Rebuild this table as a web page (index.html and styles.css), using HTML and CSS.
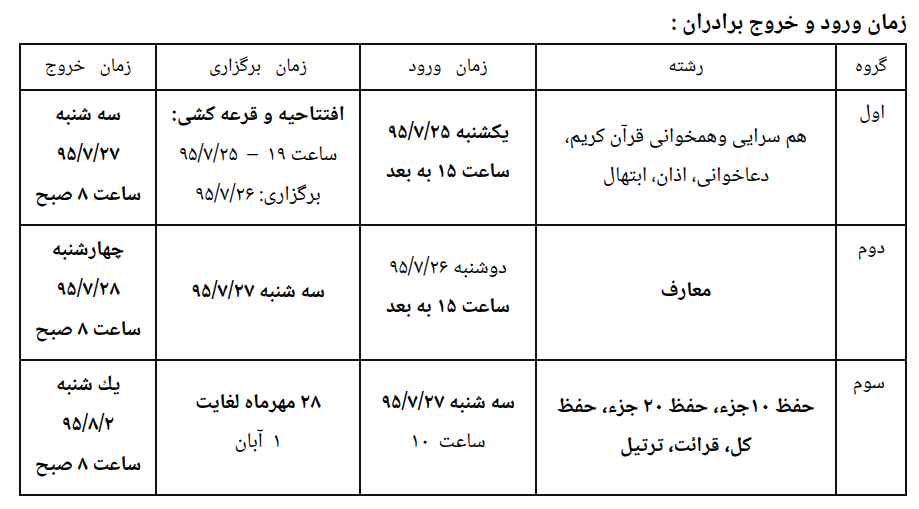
FILE: index.html
```html
<!DOCTYPE html>
<html lang="fa" dir="rtl">
<head>
<meta charset="utf-8">
<link rel="stylesheet" href="styles.css">
</head>
<body>
<div class="page">
  <h1 class="title">زمان ورود و خروج برادران :</h1>
  <table class="schedule">
    <colgroup>
      <col class="c-group">
      <col class="c-field">
      <col class="c-in">
      <col class="c-hold">
      <col class="c-out">
    </colgroup>
    <thead>
      <tr class="head-row">
        <th>گروه</th>
        <th>رشته</th>
        <th>زمان ورود</th>
        <th>زمان برگزاری</th>
        <th>زمان خروج</th>
      </tr>
    </thead>
    <tbody>
      <tr class="body-row">
        <td class="grp">اول</td>
        <td class="field"><p>هم سرایی وهمخوانی قرآن کریم،</p><p>دعاخوانی، اذان، ابتهال</p></td>
        <td class="two"><p class="b">یکشنبه ۹۵/۷/۲۵</p><p class="b">ساعت ۱۵ به بعد</p></td>
        <td class="three"><p class="b">افتتاحیه و قرعه کشی:</p><p>ساعت ۱۹ &nbsp;–&nbsp; ۹۵/۷/۲۵</p><p>برگزاری: ۹۵/۷/۲۶</p></td>
        <td class="three"><p class="b">سه شنبه</p><p class="b">۹۵/۷/۲۷</p><p class="b">ساعت ۸ صبح</p></td>
      </tr>
      <tr class="body-row">
        <td class="grp">دوم</td>
        <td class="field"><p class="b">معارف</p></td>
        <td class="two"><p>دوشنبه ۹۵/۷/۲۶</p><p class="b">ساعت ۱۵ به بعد</p></td>
        <td><p class="b">سه شنبه ۹۵/۷/۲۷</p></td>
        <td class="three"><p class="b">چهارشنبه</p><p class="b">۹۵/۷/۲۸</p><p class="b">ساعت ۸ صبح</p></td>
      </tr>
      <tr class="body-row">
        <td class="grp">سوم</td>
        <td class="field"><p class="b">حفظ ۱۰جزء، حفظ ۲۰ جزء، حفظ</p><p class="b">کل، قرائت، ترتیل</p></td>
        <td class="two"><p class="b">سه شنبه ۹۵/۷/۲۷</p><p>ساعت&nbsp; ۱۰</p></td>
        <td class="two"><p class="b">۲۸ مهرماه لغایت</p><p>۱&nbsp; آبان</p></td>
        <td class="three"><p class="b">یك شنبه</p><p class="b">۹۵/۸/۲</p><p class="b">ساعت ۸ صبح</p></td>
      </tr>
    </tbody>
  </table>
</div>
</body>
</html>
```
FILE: styles.css
```css
html, body {
  margin: 0;
  padding: 0;
  background: #ffffff;
}
body {
  font-family: "Noto Naskh Arabic", "DejaVu Sans", serif;
  color: #000;
}
.page {
  width: 886px;
  padding: 9px 12px 0 21px;
}
.title {
  margin: 0 0 3px 0;
  height: 31px;
  font-size: 23px;
  font-weight: bold;
  line-height: 31px;
  text-align: right;
}
.schedule {
  width: 886px;
  border-collapse: collapse;
  table-layout: fixed;
}
.c-group { width: 70px; }
.c-field { width: 300px; }
.c-in { width: 176px; }
.c-hold { width: 204px; }
.c-out { width: 136px; }
.schedule th, .schedule td {
  border: 2px solid #111;
  text-align: center;
  vertical-align: middle;
  padding: 0 4px;
  font-size: 21px;
}
.head-row { height: 46px; }
.body-row { height: 135px; }
.schedule th {
  font-size: 19px;
  font-weight: normal;
  word-spacing: 10px;
}
.schedule td p {
  margin: 0;
  line-height: 39px;
}
.schedule td.two { padding-bottom: 10px; }
.schedule td.field { padding-bottom: 2px; }
.schedule td.three { padding-bottom: 4px; }
.schedule td.three p { line-height: 40px; }
.schedule td.grp {
  vertical-align: top;
  text-align: right;
  font-size: 20px;
  line-height: 30px;
  padding: 8px 20px 0 4px;
}
.schedule .b { font-weight: bold; }
```
